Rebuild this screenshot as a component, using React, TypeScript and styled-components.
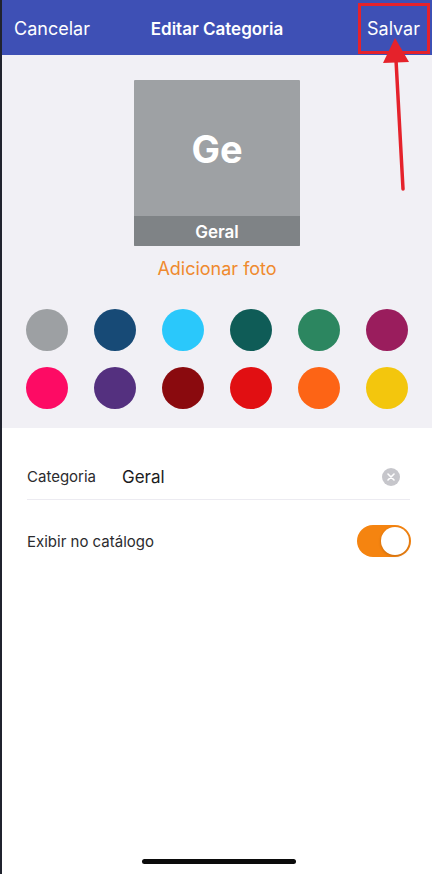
import React from "react";
import styled, { createGlobalStyle } from "styled-components";

const GlobalStyle = createGlobalStyle`
	html, body {
		margin: 0;
		padding: 0;
		background: #ffffff;
	}
	body {
		font-family: Inter, "Liberation Sans", sans-serif;
		-webkit-font-smoothing: antialiased;
	}
	* {
		box-sizing: border-box;
	}
`;

const COLORS = [
	"#9da0a3",
	"#174a76",
	"#2ac8fb",
	"#0f5c57",
	"#2c8660",
	"#9a1d5d",
	"#fd0b64",
	"#54307f",
	"#8a0a0e",
	"#e10f12",
	"#fd6415",
	"#f3c60d",
];

const Screen = styled.div`
	position: relative;
	width: 432px;
	height: 874px;
	display: flex;
	flex-direction: column;
	background: #ffffff;
	border-left: 2px solid #20232e;
	overflow: hidden;
`;

const NavBar = styled.div`
	height: 55px;
	flex: none;
	background: #3e50b5;
	display: grid;
	grid-template-columns: 1fr auto 1fr;
	align-items: center;
	padding: 0 12px 0 12px;
	color: #ffffff;
`;

const NavButton = styled.span<{ align?: "left" | "right" }>`
	font-size: 18px;
	font-weight: 400;
	justify-self: ${(p) => (p.align === "right" ? "end" : "start")};
	margin-top: 1px;
`;

const NavTitle = styled.span`
	font-size: 17px;
	font-weight: 600;
	margin-top: 2px;
`;

const Header = styled.div`
	height: 373px;
	flex: none;
	background: #f1f0f5;
	display: flex;
	flex-direction: column;
	align-items: center;
	padding-top: 25px;
`;

const Thumb = styled.div`
	width: 166px;
	height: 166px;
	background: #9ea1a4;
	display: flex;
	flex-direction: column;
	border-radius: 1px;
	overflow: hidden;
`;

const ThumbInitials = styled.div`
	flex: 1;
	display: flex;
	align-items: center;
	justify-content: center;
	color: #ffffff;
	font-weight: 700;
	font-size: 38px;
	padding-top: 1px;
`;

const ThumbLabel = styled.div`
	height: 30px;
	background: #7f8386;
	color: #ffffff;
	font-size: 17px;
	font-weight: 600;
	display: flex;
	align-items: center;
	justify-content: center;
	padding-top: 1px;
`;

const AddPhoto = styled.span`
	margin-top: 12px;
	color: #ef8a2e;
	font-size: 18px;
`;

const Palette = styled.div`
	margin-top: 30px;
	display: grid;
	grid-template-columns: repeat(6, 42px);
	column-gap: 26px;
	row-gap: 16px;
`;

const Swatch = styled.div<{ color: string }>`
	width: 42px;
	height: 42px;
	border-radius: 50%;
	background: ${(p) => p.color};
`;

const Form = styled.div`
	padding: 30px 22px 0 25px;
	display: flex;
	flex-direction: column;
`;

const Row = styled.div<{ divider?: boolean }>`
	height: ${(p) => (p.divider ? "42px" : "58px")};
	display: flex;
	align-items: center;
	border-bottom: ${(p) => (p.divider ? "1px solid #ecebf1" : "none")};
	padding-bottom: ${(p) => (p.divider ? "4px" : "0")};
	margin-top: ${(p) => (p.divider ? "0" : "12px")};
`;

const Label = styled.span<{ width?: number }>`
	font-size: 15px;
	color: #2b2b2e;
	width: ${(p) => (p.width ? `${p.width}px` : "auto")};
	flex: none;
`;

const Value = styled.span`
	flex: 1;
	font-size: 17px;
	color: #1c1c1e;
`;

const ClearIcon = styled.span`
	width: 18px;
	height: 18px;
	border-radius: 50%;
	background: #c6c6cb;
	display: flex;
	align-items: center;
	justify-content: center;
	margin-right: 10px;
`;

const Spacer = styled.div`
	flex: 1;
`;

const Toggle = styled.div<{ on?: boolean }>`
	width: 54px;
	height: 32px;
	border-radius: 16px;
	background: ${(p) => (p.on ? "#f58410" : "#e9e9eb")};
	display: flex;
	align-items: center;
	justify-content: ${(p) => (p.on ? "flex-end" : "flex-start")};
	padding: 2px;
	margin-right: -1px;
`;

const Knob = styled.div`
	width: 28px;
	height: 28px;
	border-radius: 50%;
	background: #ffffff;
	box-shadow: 0 1px 3px rgba(0, 0, 0, 0.2);
`;

const HomeBar = styled.div`
	position: absolute;
	left: 140px;
	bottom: 10px;
	width: 154px;
	height: 5px;
	border-radius: 3px;
	background: #0b0b0b;
`;

const Highlight = styled.div`
	position: absolute;
	left: 356px;
	top: 3px;
	width: 72px;
	height: 51px;
	border: 3px solid #e5222b;
`;

const Arrow = styled.svg`
	position: absolute;
	left: 370px;
	top: 30px;
	width: 50px;
	height: 170px;
`;

export default function App() {
	return (
		<>
			<GlobalStyle />
			<Screen>
				<NavBar>
					<NavButton>Cancelar</NavButton>
					<NavTitle>Editar Categoria</NavTitle>
					<NavButton align="right">Salvar</NavButton>
				</NavBar>
				<Header>
					<Thumb>
						<ThumbInitials>Ge</ThumbInitials>
						<ThumbLabel>Geral</ThumbLabel>
					</Thumb>
					<AddPhoto>Adicionar foto</AddPhoto>
					<Palette>
						{COLORS.map((c) => (
							<Swatch key={c} color={c} />
						))}
					</Palette>
				</Header>
				<Form>
					<Row divider>
						<Label width={95}>Categoria</Label>
						<Value>Geral</Value>
						<ClearIcon>
							<svg width="8" height="8" viewBox="0 0 8 8">
								<path d="M1 1 L7 7 M7 1 L1 7" stroke="#ffffff" strokeWidth="1.6" strokeLinecap="round" />
							</svg>
						</ClearIcon>
					</Row>
					<Row>
						<Label>Exibir no catálogo</Label>
						<Spacer />
						<Toggle on>
							<Knob />
						</Toggle>
					</Row>
				</Form>
				<HomeBar />
				<Highlight />
				<Arrow viewBox="0 0 50 170">
					<path d="M31 159 L24 30" stroke="#e5222b" strokeWidth="3.5" strokeLinecap="round" />
					<path d="M23 8 L37 32 L11 33 Z" fill="#e5222b" />
				</Arrow>
			</Screen>
		</>
	);
}
